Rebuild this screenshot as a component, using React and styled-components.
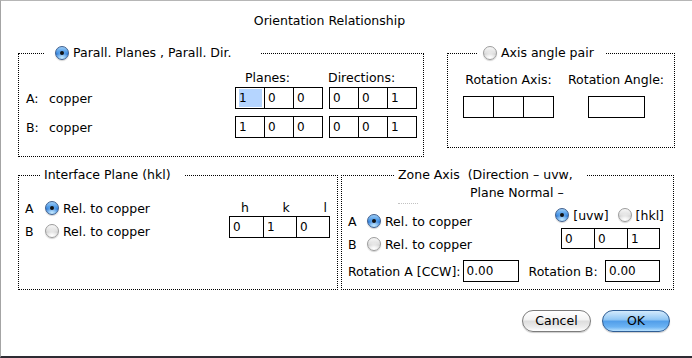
import React from 'react';
import styled, { createGlobalStyle } from 'styled-components';

const GlobalStyle = createGlobalStyle`
  html, body {
    margin: 0;
    padding: 0;
    background: #fff;
  }
  body {
    font-family: "DejaVu Sans", "Liberation Sans", sans-serif;
    font-size: 12.5px;
    color: #000;
  }
`;

const Window = styled.div`
  width: 692px;
  height: 358px;
  box-sizing: border-box;
  background: #fff;
  border-top: 1px solid #b6b6b6;
  border-left: 1px solid #a4a4a4;
  border-bottom: 2px solid #2e2b33;
  display: flex;
  flex-direction: column;
  overflow: hidden;
`;

const Title = styled.div`
  margin-top: 12px;
  padding-right: 34px;
  line-height: 16px;
  text-align: center;
`;

const PanelRow = styled.div`
  display: flex;
  align-items: ${p => p.$align};
  gap: ${p => p.$gap}px;
  margin-top: ${p => p.$top}px;
  padding-left: 17px;
`;

const Panel = styled.fieldset`
  width: ${p => p.$w}px;
  box-sizing: border-box;
  margin: 0;
  padding: 0;
  min-width: 0;
  border: 1px dotted #000;
`;

const Legend = styled.legend`
  margin-left: ${p => p.$ml}px;
  padding: 0 ${p => p.$pr}px 0 ${p => p.$pl}px;
  height: 16px;
  line-height: 16px;
  white-space: pre;
`;

const LegendInner = styled.span`
  display: inline-flex;
  align-items: center;
  gap: 4px;
  height: 16px;
  vertical-align: top;
`;

const RadioDot = styled.span`
  position: relative;
  flex: none;
  width: 14px;
  height: 14px;
  box-sizing: border-box;
  border-radius: 50%;
  border: 1px solid ${p => (p.$on ? '#3f5f8e' : '#9c9c9c')};
  background: ${p =>
    p.$on
      ? 'radial-gradient(circle at 50% 90%, #c4e8ff 0%, rgba(196,232,255,0) 55%), linear-gradient(#9ccdf7 0%, #4a97e6 45%, #2a78d6 60%, #6cb3f2 100%)'
      : 'radial-gradient(circle at 50% 90%, #ffffff 0%, rgba(255,255,255,0) 55%), linear-gradient(#f7f7f7 0%, #e2e2e2 45%, #d2d2d2 60%, #ececec 100%)'};
  box-shadow: 0 1px 1px rgba(0, 0, 0, 0.18);

  &::after {
    content: '';
    display: ${p => (p.$on ? 'block' : 'none')};
    position: absolute;
    left: 50%;
    top: 50%;
    width: 4px;
    height: 4px;
    margin: -2px 0 0 -2px;
    border-radius: 50%;
    background: #111;
  }
`;

const Option = styled.label`
  display: inline-flex;
  align-items: center;
  gap: ${p => p.$gap ?? 4}px;
  height: 18px;
`;

const Radio = ({ on, children, gap }) => (
  <Option $gap={gap}>
    <RadioDot $on={on} />
    <span>{children}</span>
  </Option>
);

const Fields = styled.div`
  display: flex;
  flex: none;
  height: ${p => p.$h || 22}px;
  box-sizing: border-box;
  border: 1px solid #000;
  background: #fff;
  margin-left: ${p => p.$ml || 0};
  margin-right: ${p => p.$mr || 0}px;
`;

const Cell = styled.div`
  display: flex;
  width: ${p => p.$w}px;
  box-sizing: border-box;
  padding: 1px 2px 1px 3px;

  & + & {
    border-left: 1px solid #000;
  }
`;

const CellText = styled.span`
  flex: 1;
  display: flex;
  align-items: center;
  font-size: 12px;
  background: ${p => (p.$selected ? '#b5d5ff' : 'transparent')};
`;

const FieldGroup = ({ values, widths, h, ml, mr, selected }) => (
  <Fields $h={h} $ml={ml} $mr={mr}>
    {widths.map((w, i) => (
      <Cell key={i} $w={w}>
        <CellText $selected={selected === i}>{values[i] ?? ''}</CellText>
      </Cell>
    ))}
  </Fields>
);

/* Parall. planes panel */
const PlanesBody = styled.div`
  padding: 9px 6px 18px 7px;
`;

const PlanesGrid = styled.div`
  display: grid;
  grid-template-columns: 17px 1fr 88px 88px;
  column-gap: 6px;
  row-gap: ${p => p.$rowGap}px;
  margin-bottom: ${p => p.$bottom || 0}px;
  align-items: center;
`;

const ColHead = styled.span`
  line-height: 16px;
  padding-left: ${p => p.$indent}px;
  margin-left: ${p => p.$shift || 0}px;
  white-space: nowrap;
`;

/* Axis angle pair panel */
const AxisBody = styled.div`
  display: flex;
  gap: 14px;
  padding: 11px 0 29px 15px;
`;

const AxisColumn = styled.div`
  display: flex;
  flex-direction: column;
  align-items: center;
  gap: 8px;
  line-height: 16px;
  white-space: nowrap;
`;

/* shared lower panels */
const SplitBody = styled.div`
  display: flex;
  justify-content: space-between;
  padding: ${p => p.$pad};
`;

const Stack = styled.div`
  display: flex;
  flex-direction: column;
  align-items: ${p => p.$align || 'stretch'};
  gap: ${p => p.$gap || 0}px;
  padding-top: ${p => p.$top || 0}px;
`;

const OptionRow = styled.div`
  display: flex;
  align-items: center;
  height: 18px;
  gap: ${p => p.$gap || 0}px;
  white-space: nowrap;
`;

const Side = styled.span`
  flex: none;
  width: ${p => p.$w}px;
`;

const HklLabels = styled.div`
  display: flex;
  justify-content: space-between;
  padding: 0 3px 0 12px;
  line-height: 16px;
`;

const Subtitle = styled.div`
  margin-top: 2px;
  padding-left: 128px;
  line-height: 16px;
`;

const ClippedLine = styled.div`
  width: 20px;
  margin: 2px 0 2px 56px;
  border-top: 1px dotted #c2c2c2;
`;

const RotationRow = styled.div`
  display: flex;
  align-items: center;
  margin-top: 7px;
  padding: 0 13px 7px 6px;
  white-space: nowrap;
`;

const RotationLabel = styled.span`
  margin-left: ${p => p.$ml || 0}px;
`;

const ButtonBar = styled.div`
  display: flex;
  justify-content: flex-end;
  gap: 11px;
  margin-top: 20px;
  padding-right: 22px;
`;

const Button = styled.button`
  width: ${p => p.$w}px;
  height: 22px;
  padding: 0;
  border-radius: 11px;
  font: inherit;
  line-height: 20px;
  color: #000;
  border: 1px solid ${p => (p.$primary ? '#2f5d94' : '#7c7c7c')};
  background: ${p =>
    p.$primary
      ? 'linear-gradient(#d3eafc 0%, #93c8f5 42%, #529fea 52%, #6cb3f3 80%, #b8e1ff 100%)'
      : 'linear-gradient(#ffffff 0%, #f4f4f4 42%, #dedede 52%, #ececec 80%, #ffffff 100%)'};
  box-shadow: 0 1px 1px rgba(0, 0, 0, 0.2);
`;

export default function App() {
  return (
    <>
      <GlobalStyle />
      <Window>
        <Title>Orientation Relationship</Title>

        <PanelRow $top={16} $gap={23} $align="flex-start">
          <Panel $w={406}>
            <Legend $ml={26} $pl={10} $pr={30}>
              <LegendInner>
                <RadioDot $on />
                <span>Parall. Planes , Parall. Dir.</span>
              </LegendInner>
            </Legend>
            <PlanesBody>
              <PlanesGrid $rowGap={0} $bottom={1}>
                <span />
                <span />
                <ColHead $indent={10}>Planes:</ColHead>
                <ColHead $indent={0} $shift={-1}>Directions:</ColHead>
              </PlanesGrid>
              <PlanesGrid $rowGap={7}>
                <span>A:</span>
                <span>copper</span>
                <FieldGroup values={['1', '0', '0']} widths={[28, 29, 29]} selected={0} />
                <FieldGroup values={['0', '0', '1']} widths={[28, 29, 29]} />
                <span>B:</span>
                <span>copper</span>
                <FieldGroup values={['1', '0', '0']} widths={[28, 29, 29]} />
                <FieldGroup values={['0', '0', '1']} widths={[28, 29, 29]} />
              </PlanesGrid>
            </PlanesBody>
          </Panel>

          <Panel $w={228}>
            <Legend $ml={29} $pl={6} $pr={12}>
              <LegendInner>
                <RadioDot />
                <span>Axis angle pair</span>
              </LegendInner>
            </Legend>
            <AxisBody>
              <AxisColumn>
                <span>Rotation Axis:</span>
                <FieldGroup values={[]} widths={[29, 30, 30]} />
              </AxisColumn>
              <AxisColumn>
                <span>Rotation Angle:</span>
                <FieldGroup values={[]} widths={[55]} />
              </AxisColumn>
            </AxisBody>
          </Panel>
        </PanelRow>

        <PanelRow $top={10} $gap={3} $align="stretch">
          <Panel $w={320}>
            <Legend $ml={21} $pl={4} $pr={14}>
              Interface Plane (hkl)
            </Legend>
            <SplitBody $pad="16px 7px 0 6px">
              <Stack $gap={5}>
                <OptionRow>
                  <Side $w={20}>A</Side>
                  <Radio on>Rel. to copper</Radio>
                </OptionRow>
                <OptionRow>
                  <Side $w={20}>B</Side>
                  <Radio>Rel. to copper</Radio>
                </OptionRow>
              </Stack>
              <Stack $top={1}>
                <HklLabels>
                  <span>h</span>
                  <span>k</span>
                  <span>l</span>
                </HklLabels>
                <FieldGroup values={['0', '1', '0']} widths={[33, 33, 33]} />
              </Stack>
            </SplitBody>
          </Panel>

          <Panel $w={333}>
            <Legend $ml={53} $pl={3} $pr={14}>
              {'Zone Axis  (Direction – uvw,'}
            </Legend>
            <Subtitle>Plane Normal –</Subtitle>
            <ClippedLine />
            <SplitBody $pad="0 9px 0 6px">
              <Stack $gap={5} $top={6}>
                <OptionRow>
                  <Side $w={19}>A</Side>
                  <Radio on>Rel. to copper</Radio>
                </OptionRow>
                <OptionRow>
                  <Side $w={19}>B</Side>
                  <Radio>Rel. to copper</Radio>
                </OptionRow>
              </Stack>
              <Stack $gap={4} $align="flex-end">
                <OptionRow $gap={9}>
                  <Radio on>[uvw]</Radio>
                  <Radio>[hkl]</Radio>
                </OptionRow>
                <FieldGroup values={['0', '0', '1']} widths={[32, 33, 32]} h={21} mr={4} />
              </Stack>
            </SplitBody>
            <RotationRow>
              <RotationLabel>Rotation A [CCW]:</RotationLabel>
              <FieldGroup values={['0.00']} widths={[54]} ml="2px" />
              <RotationLabel $ml={10}>Rotation B:</RotationLabel>
              <FieldGroup values={['0.00']} widths={[53]} ml="auto" />
            </RotationRow>
          </Panel>
        </PanelRow>

        <ButtonBar>
          <Button $w={69}>Cancel</Button>
          <Button $w={68} $primary>
            OK
          </Button>
        </ButtonBar>
      </Window>
    </>
  );
}
